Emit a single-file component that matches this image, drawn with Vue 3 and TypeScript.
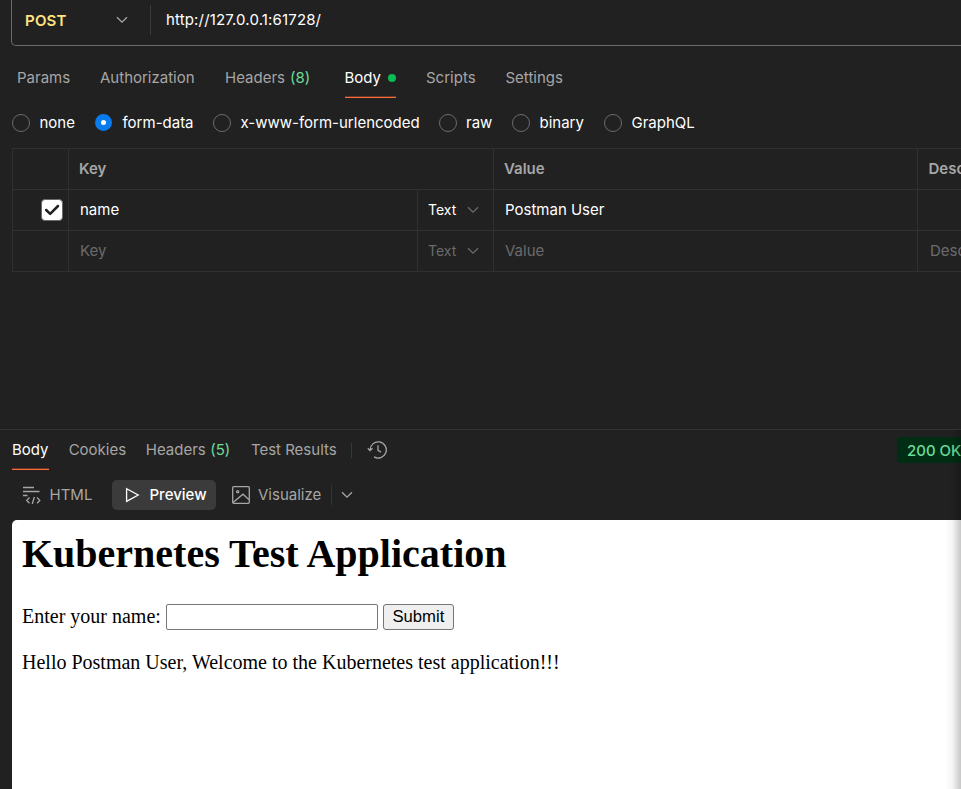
<script setup lang="ts">
import { ref } from 'vue'

interface Tab {
  label: string
  width: number
  count?: number
  active?: boolean
  dot?: boolean
}

const requestTabs: Tab[] = [
  { label: 'Params', width: 83 },
  { label: 'Authorization', width: 125 },
  { label: 'Headers', width: 119.5, count: 8 },
  { label: 'Body', width: 81.5, active: true, dot: true },
  { label: 'Scripts', width: 79.5 },
  { label: 'Settings', width: 60 },
]

const bodyModes = [
  { label: 'none', width: 83 },
  { label: 'form-data', width: 118 },
  { label: 'x-www-form-urlencoded', width: 225.5 },
  { label: 'raw', width: 73.5 },
  { label: 'binary', width: 92 },
  { label: 'GraphQL', width: 100 },
]
const mode = ref('form-data')

const responseTabs: Tab[] = [
  { label: 'Body', width: 56.5, active: true },
  { label: 'Cookies', width: 77 },
  { label: 'Headers', width: 105, count: 5 },
  { label: 'Test Results', width: 100 },
]
const answer = ref('')
</script>

<template>
  <div class="app">
    <div class="url-bar">
      <div class="method">
        <span>POST</span>
        <svg class="chevron" viewBox="0 0 12 8"><path d="M1 1.2 6 6.2 11 1.2" /></svg>
      </div>
      <div class="url">http://127.0.0.1:61728/</div>
    </div>

    <nav class="tabs">
      <div v-for="t in requestTabs" :key="t.label" class="slot" :style="{ width: t.width + 'px' }">
        <span class="tab" :class="{ active: t.active }">{{ t.label }}<span v-if="t.count" class="count">({{ t.count }})</span><i v-if="t.dot" class="dot"></i></span>
      </div>
    </nav>

    <div class="modes">
      <label v-for="m in bodyModes" :key="m.label" class="mode" :style="{ width: m.width + 'px' }" @click="mode = m.label">
        <span class="radio" :class="{ on: mode === m.label }"></span>{{ m.label }}
      </label>
    </div>

    <div class="grid">
      <div class="row head">
        <div class="check"></div>
        <div class="key wide">Key</div>
        <div class="value">Value</div>
        <div class="desc">Description</div>
      </div>
      <div class="row">
        <div class="check">
          <span class="box"><svg viewBox="0 0 22 22"><path d="M4.6 11 9 15.2 17.6 6.6" /></svg></span>
        </div>
        <div class="key">name</div>
        <div class="type">Text<svg class="chevron" viewBox="0 0 12 8"><path d="M1 1.2 6 6.2 11 1.2" /></svg></div>
        <div class="value">Postman User</div>
        <div class="desc"></div>
      </div>
      <div class="row empty">
        <div class="check"></div>
        <div class="key">Key</div>
        <div class="type">Text<svg class="chevron" viewBox="0 0 12 8"><path d="M1 1.2 6 6.2 11 1.2" /></svg></div>
        <div class="value">Value</div>
        <div class="desc">Description</div>
      </div>
    </div>

    <section class="response">
      <div class="response-bar">
        <nav class="tabs">
          <div v-for="t in responseTabs" :key="t.label" class="slot" :style="{ width: t.width + 'px' }">
            <span class="tab" :class="{ active: t.active }">{{ t.label }}<span v-if="t.count" class="count">({{ t.count }})</span></span>
          </div>
        </nav>
        <svg class="history" viewBox="0 0 20 20">
          <path d="M3.1 10.2A8.1 8.1 0 1 1 7 16.9M.8 8.2 3 10.6 5.5 8.3M11 5.3V10.3L14 12.1" />
        </svg>
        <span class="status">200 OK</span>
      </div>

      <div class="views">
        <div class="view html">
          <svg viewBox="0 0 19 19"><path d="M1 1.5H12M1 5.5H17.5M1 9.5H5.5M7.5 11.5 4.7 14.4 7.5 17.3M15 11.5 17.8 14.4 15 17.3M12.4 11 10.2 18" /></svg>HTML
        </div>
        <div class="view preview">
          <svg viewBox="0 0 15 16"><path d="M1.6 1.7 13.2 8 1.6 14.3Z" /></svg>Preview
        </div>
        <div class="view visualize">
          <svg viewBox="0 0 18 18"><rect x=".7" y=".7" width="16.6" height="16.6" rx="1" /><path d="M1 16.5 11 8.2 17 13.8" /><circle cx="5.7" cy="5.8" r="1.1" /></svg>Visualize
        </div>
        <div class="more"><svg class="chevron" viewBox="0 0 12 8"><path d="M1 1.2 6 6.2 11 1.2" /></svg></div>
      </div>

      <div class="page">
        <h1>Kubernetes Test Application</h1>
        <form @submit.prevent>
          <label for="name">Enter your name:</label>
          <input id="name" v-model="answer" type="text" />
          <button type="submit">Submit</button>
        </form>
        <p>Hello Postman User, Welcome to the Kubernetes test application!!!</p>
      </div>
    </section>
    <div class="edge-shade"></div>
  </div>
</template>

<style>
body { margin: 0; background: #212121; }
</style>

<style scoped>
* { box-sizing: border-box; }
.app {
  position: relative;
  width: 961px;
  height: 789px;
  overflow: hidden;
  display: flex;
  flex-direction: column;
  background: #212121;
  color: #fff;
  font: 15px/20px Inter, sans-serif;
  white-space: nowrap;
}
svg { display: block; flex: none; fill: none; stroke: currentColor; stroke-width: 1.3; }
.chevron { width: 12px; height: 8px; color: #a6a6a6; }

.url-bar {
  display: flex;
  flex: none;
  height: 46px;
  margin-left: 11px;
  padding-top: 5px;
  border: 1px solid #6b6b6b;
  border-width: 0 0 1px 1px;
  border-radius: 0 0 0 5px;
}
.method {
  display: flex;
  align-items: center;
  justify-content: space-between;
  width: 139px;
  height: 30px;
  padding: 0 22px 0 13px;
  border-right: 1px solid #3b3b3b;
  color: #ffe47e;
  font-weight: 600;
  letter-spacing: 0.2px;
}
.method span { padding-top: 2px; }
.url { padding: 5px 0 0 15px; letter-spacing: 0.15px; }

.tabs { display: flex; flex: none; color: #a6a6a6; }
.slot { flex: none; }
.tab { display: inline-flex; align-items: center; height: 40px; border-bottom: 1px solid transparent; }
.tab.active {
  color: #fff;
  border-bottom-color: #ff6c37;
  box-shadow: inset 0 -1px 0 rgba(255, 108, 55, 0.3);
}
.count { margin-left: 5px; color: #6bdd9a; }
.dot { width: 8px; height: 8px; margin-left: 7px; border-radius: 50%; background: #0cbb52; }
.app > .tabs { padding: 12px 0 0 17px; }

.modes { display: flex; flex: none; height: 51px; padding: 0 0 2px 12px; }
.mode { display: flex; align-items: center; flex: none; gap: 9.5px; }
.radio { width: 18px; height: 18px; flex: none; border: 1px solid #6b6b6b; border-radius: 50%; }
.radio.on { border: 6px solid #097bed; width: 17px; height: 17px; background: #fff; margin-right: 1px; }

.grid { flex: none; margin: -1px 0 0 12px; border-top: 1px solid #303030; border-left: 1px solid #303030; }
.row { display: flex; height: 41px; border-bottom: 1px solid #303030; }
.row > div { display: flex; align-items: center; flex: none; border-right: 1px solid #303030; }
.row .check { width: 56px; justify-content: flex-end; padding-right: 5px; }
.row .key { width: 349px; padding-left: 11px; }
.row .wide { width: 425px; padding-left: 10px; }
.row .type { width: 76px; padding: 0 14px 0 10px; justify-content: space-between; font-size: 14px; }
.row .value { width: 424px; padding-left: 11px; }
.row .desc { width: 200px; padding-left: 12px; }
.head { color: #a6a6a6; font-weight: 600; }
.head .value.value { padding-left: 10px; }
.head .desc.desc { padding-left: 10.5px; }
.empty { color: #6b6b6b; }
.type .chevron { color: #6b6b6b; }
.box { width: 22px; height: 22px; border: 1px solid #6b6b6b; border-radius: 4px; background: #fff; color: #212121; }
.box svg { width: 20px; height: 20px; stroke-width: 2.8; stroke-linecap: round; stroke-linejoin: round; }

.response {
  display: flex;
  flex-direction: column;
  flex: none;
  margin-top: 157px;
  height: 360px;
  border-top: 1px solid #333;
}
.response-bar { display: flex; align-items: center; height: 40px; padding-left: 12px; }
.response-bar .tabs { width: 340px; justify-content: space-between; }
.response-bar .count { margin-left: 4.5px; }
.history { width: 20px; height: 20px; margin-left: 15px; color: #a6a6a6; }
.response-bar .tabs::after { content: ''; width: 1px; height: 15px; align-self: center; background: #383838; }
.status {
  width: 80px;
  height: 26px;
  margin-left: 510px;
  flex: none;
  padding: 4px 0 0 10px;
  border-radius: 4px;
  background: #002e14;
  color: #6bdd9a;
  font-weight: 500;
}
.views { display: flex; align-items: center; height: 30px; margin: 10px 0 10px 12px; color: #a6a6a6; }
.view { display: flex; align-items: center; flex: none; height: 30px; }
.html { width: 100px; padding-left: 10px; gap: 8.5px; }
.html svg { width: 19px; height: 19px; }
.preview { width: 104px; padding-left: 13px; gap: 9.5px; border-radius: 5px; background: #3b3b3b; color: #fff; font-weight: 500; }
.preview svg { width: 15px; height: 16px; }
.visualize { width: 115px; padding-left: 16px; gap: 8px; }
.visualize svg { width: 18px; height: 18px; }
.more { padding: 6px 0 6px 9px; border-left: 1px solid #333; }

.page {
  flex: 1;
  margin-left: 12px;
  padding: 11px 10px 10px;
  border-radius: 5px 0 0;
  background: #fff;
  color: #000;
  font: 20px/23px 'Liberation Serif', 'Times New Roman', serif;
}
h1 { margin: 0 0 26px; font-size: 40px; line-height: 46px; font-weight: 700; }
form { display: flex; align-items: center; height: 27px; }
input { width: 212px; height: 26px; margin: 0 5px; padding: 1px 2px; border: 1px solid #767676; border-radius: 2px; }
button {
  width: 71px;
  height: 26px;
  padding: 0;
  border: 1px solid #767676;
  border-radius: 3px;
  background: #efefef;
  color: #000;
  font: 16.67px/22px 'Liberation Sans', Arial, sans-serif;
}
p { margin: 21px 0 0; }
.edge-shade {
  position: absolute;
  right: 0;
  top: 430px;
  bottom: 0;
  width: 16px;
  background: linear-gradient(to right, transparent, rgba(0, 0, 0, 0.04) 45%, rgba(0, 0, 0, 0.22));
}
</style>
